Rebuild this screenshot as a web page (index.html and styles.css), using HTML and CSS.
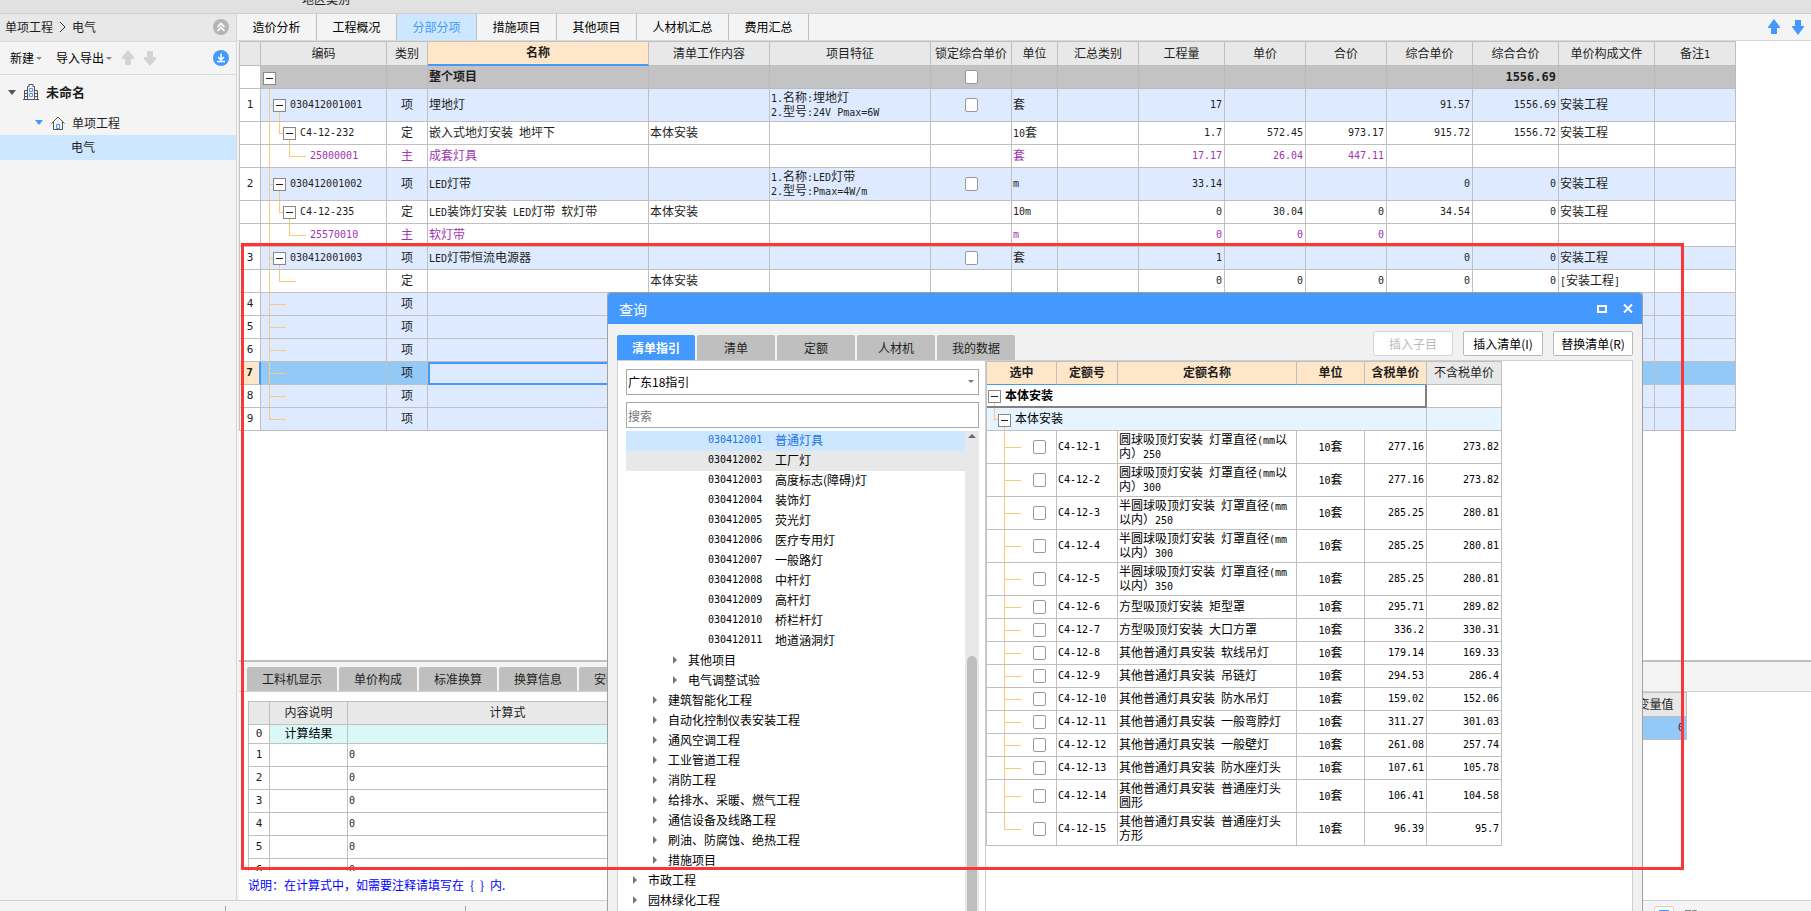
FILE: index.html
```html
<!DOCTYPE html>
<html lang="zh-CN">
<head>
<meta charset="utf-8">
<title>分部分项</title>
<link rel="stylesheet" href="styles.css">
</head>
<body>
<header class="strip"><span>地区类别</span></header>
<div class="work">
  <aside class="side">
    <div class="crumb">
      <span>单项工程</span>
      <svg width="7" height="12" viewBox="0 0 7 12"><path d="M1 1l5 5-5 5" fill="none" stroke="#333"/></svg>
      <span>电气</span>
      <button class="round end" aria-label="收起"><svg width="16" height="16" viewBox="0 0 16 16"><circle cx="8" cy="8" r="8" fill="#b5b5b5"/><path d="M4.500 8L8 4.500 11.500 8M4.500 12L8 8.500l3.500 3.500" fill="none" stroke="#fff" stroke-width="1.600"/></svg></button>
    </div>
    <div class="tools">
      <button class="menu">新建</button>
      <button class="menu second">导入导出</button>
      <button class="round" aria-label="上移"><svg width="12" height="16" viewBox="0 0 12 16"><path d="M6 0l6 7v2H9v6H3V9H0V7z" fill="#d4d4d4"/></svg></button>
      <button class="round" aria-label="下移"><svg width="12" height="16" viewBox="0 0 12 16"><path d="M6 16l6-7V7H9V1H3v6H0v2z" fill="#d4d4d4"/></svg></button>
      <button class="round end" aria-label="下载"><svg width="16" height="16" viewBox="0 0 16 16"><circle cx="8" cy="8" r="8" fill="#4499ff"/><path d="M8 3.500v6M5 7l3 3 3-3M4 11.500h8" fill="none" stroke="#fff" stroke-width="1.500"/></svg></button>
    </div>
    <nav class="project">
      <div class="p1"><svg width="8" height="5" viewBox="0 0 8 5"><path d="M0 0h8L4 5z" fill="#555"/></svg>
        <svg class="picon" width="16" height="16" viewBox="0 0 16 16"><path d="M4.500 15V2.500h1.500V.500h4v2h1.500V15M4.500 6.500h-3V15M11.500 6.500h3V15M0 15.500h16M1.500 9.500h3M1.500 12.500h3M11.500 9.500h3M11.500 12.500h3" fill="none" stroke="#555"/><path d="M6.500 4.500h3v3h-3zM6.500 9.500h3v3h-3z" fill="none" stroke="#4499ff"/></svg>
        <b>未命名</b></div>
      <div class="p2"><svg width="8" height="5" viewBox="0 0 8 5"><path d="M0 0h8L4 5z" fill="#4499ff"/></svg>
        <svg class="picon" width="14" height="14" viewBox="0 0 14 14"><path d="M.500 7.500L7 1l6.500 6.500M2.500 6v7.500h9V6" fill="none" stroke="#555"/><path d="M5.500 8.500h3v4h-3z" fill="none" stroke="#4499ff"/></svg>
        <span>单项工程</span></div>
      <div class="p3">电气</div>
    </nav>
  </aside>

  <main class="main">
    <div class="tabs">
      <button>造价分析</button><button>工程概况</button><button class="on">分部分项</button><button>措施项目</button><button>其他项目</button><button class="wide">人材机汇总</button><button>费用汇总</button>
      <div class="arrows">
        <svg width="12" height="16" viewBox="0 0 12 16"><path d="M6 0l6 8v1H9v6H3V9H0V8z" fill="#4499ff"/></svg>
        <svg width="12" height="16" viewBox="0 0 12 16"><path d="M6 16l6-8V7H9V1H3v6H0v1z" fill="#4499ff"/></svg>
      </div>
    </div>

    <div class="gridarea">
      <table class="grid items">
        <colgroup><col class="w21"><col class="w126"><col class="w41"><col class="w221"><col class="w121"><col class="w161"><col class="w81"><col class="w46"><col class="w81"><col class="w86"><col class="w81"><col class="w81"><col class="w86"><col class="w86"><col class="w96"><col class="w81"></colgroup>
        <thead><tr><th></th><th>编码</th><th>类别</th><th class="hot">名称</th><th>清单工作内容</th><th>项目特征</th><th>锁定综合单价</th><th>单位</th><th>汇总类别</th><th>工程量</th><th>单价</th><th>合价</th><th>综合单价</th><th>综合合价</th><th>单价构成文件</th><th>备注<span class="m">1</span></th></tr></thead>
        <tbody>
        <tr class="total"><th></th><td class="t0"><button class="tog" aria-label="折叠"></button></td><td></td><td>整个项目</td><td></td><td></td><td class="chk"><input type="checkbox" aria-label="锁定全部"></td><td></td><td></td><td></td><td></td><td></td><td></td><td class="n">1556.69</td><td></td><td></td></tr>
        <tr class="item tall"><th>1</th><td class="code t1"><button class="tog" aria-label="折叠"></button>030412001001</td><td class="c">项</td><td>埋地灯</td><td></td><td><span class="m">1.</span>名称<span class="m">:</span>埋地灯<br><span class="m">2.</span>型号<span class="m">:24V Pmax=6W</span></td><td class="chk"><input type="checkbox" aria-label="锁定 1"></td><td>套</td><td></td><td class="n">17</td><td></td><td></td><td class="n">91.57</td><td class="n">1556.69</td><td>安装工程</td><td></td></tr>
        <tr><th></th><td class="code t2"><button class="tog" aria-label="折叠"></button>C4-12-232</td><td class="c">定</td><td>嵌入式地灯安装&ensp;地坪下</td><td>本体安装</td><td></td><td></td><td><span class="m">10</span>套</td><td></td><td class="n">1.7</td><td class="n">572.45</td><td class="n">973.17</td><td class="n">915.72</td><td class="n">1556.72</td><td>安装工程</td><td></td></tr>
        <tr class="main-mat"><th></th><td class="code t3">25000001</td><td class="c">主</td><td>成套灯具</td><td></td><td></td><td></td><td>套</td><td></td><td class="n">17.17</td><td class="n">26.04</td><td class="n">447.11</td><td></td><td></td><td></td><td></td></tr>
        <tr class="item tall"><th>2</th><td class="code t1"><button class="tog" aria-label="折叠"></button>030412001002</td><td class="c">项</td><td><span class="m">LED</span>灯带</td><td></td><td><span class="m">1.</span>名称<span class="m">:LED</span>灯带<br><span class="m">2.</span>型号<span class="m">:Pmax=4W/m</span></td><td class="chk"><input type="checkbox" aria-label="锁定 2"></td><td class="u">m</td><td></td><td class="n">33.14</td><td></td><td></td><td class="n">0</td><td class="n">0</td><td>安装工程</td><td></td></tr>
        <tr><th></th><td class="code t2"><button class="tog" aria-label="折叠"></button>C4-12-235</td><td class="c">定</td><td><span class="m">LED</span>装饰灯安装<span class="m"> LED</span>灯带&ensp;软灯带</td><td>本体安装</td><td></td><td></td><td class="u">10m</td><td></td><td class="n">0</td><td class="n">30.04</td><td class="n">0</td><td class="n">34.54</td><td class="n">0</td><td>安装工程</td><td></td></tr>
        <tr class="main-mat"><th></th><td class="code t3">25570010</td><td class="c">主</td><td>软灯带</td><td></td><td></td><td></td><td class="u">m</td><td></td><td class="n">0</td><td class="n">0</td><td class="n">0</td><td></td><td></td><td></td><td></td></tr>
        <tr class="item"><th>3</th><td class="code t1"><button class="tog" aria-label="折叠"></button>030412001003</td><td class="c">项</td><td><span class="m">LED</span>灯带恒流电源器</td><td></td><td></td><td class="chk"><input type="checkbox" aria-label="锁定 3"></td><td>套</td><td></td><td class="n">1</td><td></td><td></td><td class="n">0</td><td class="n">0</td><td>安装工程</td><td></td></tr>
        <tr><th></th><td class="t2leaf"></td><td class="c">定</td><td></td><td>本体安装</td><td></td><td></td><td></td><td></td><td class="n">0</td><td class="n">0</td><td class="n">0</td><td class="n">0</td><td class="n">0</td><td><span class="m">[</span>安装工程<span class="m">]</span></td><td></td></tr>
        <tr class="item"><th>4</th><td class="t1leaf"></td><td class="c">项</td><td></td><td></td><td></td><td></td><td></td><td></td><td></td><td></td><td></td><td></td><td></td><td></td><td></td></tr>
        <tr class="item"><th>5</th><td class="t1leaf"></td><td class="c">项</td><td></td><td></td><td></td><td></td><td></td><td></td><td></td><td></td><td></td><td></td><td></td><td></td><td></td></tr>
        <tr class="item"><th>6</th><td class="t1leaf"></td><td class="c">项</td><td></td><td></td><td></td><td></td><td></td><td></td><td></td><td></td><td></td><td></td><td></td><td></td><td></td></tr>
        <tr class="item picked"><th>7</th><td class="t1leaf"></td><td class="c">项</td><td class="focus"></td><td></td><td></td><td></td><td></td><td></td><td></td><td></td><td></td><td></td><td></td><td></td><td></td></tr>
        <tr class="item"><th>8</th><td class="t1leaf"></td><td class="c">项</td><td></td><td></td><td></td><td></td><td></td><td></td><td></td><td></td><td></td><td></td><td></td><td></td><td></td></tr>
        <tr class="item"><th>9</th><td class="t1last"></td><td class="c">项</td><td></td><td></td><td></td><td></td><td></td><td></td><td></td><td></td><td></td><td></td><td></td><td></td><td></td></tr>
        </tbody>
      </table>
    </div>

    <section class="lower">
      <div class="ltabs"><button class="w90">工料机显示</button><button>单价构成</button><button>标准换算</button><button>换算信息</button><button>安装费用</button></div>
      <div class="lbody">
        <div class="calcs">
          <table class="grid calc">
            <colgroup><col class="w21"><col class="w78"><col class="w320"></colgroup>
            <thead><tr><th></th><th>内容说明</th><th>计算式</th></tr></thead>
            <tbody>
            <tr class="result"><th>0</th><td class="c">计算结果</td><td></td></tr>
            <tr><th>1</th><td></td><td class="code">0</td></tr>
            <tr><th>2</th><td></td><td class="code">0</td></tr>
            <tr><th>3</th><td></td><td class="code">0</td></tr>
            <tr><th>4</th><td></td><td class="code">0</td></tr>
            <tr><th>5</th><td></td><td class="code">0</td></tr>
            <tr><th>6</th><td></td><td class="code">0</td></tr>
            </tbody>
          </table>
        </div>
        <table class="grid vars">
          <thead><tr><th>变量值</th></tr></thead>
          <tbody><tr class="picked"><td class="n">0</td></tr></tbody>
        </table>
      </div>
      <p class="note">说明：在计算式中，如需要注释请填写在&ensp;{&ensp;}&ensp;内.</p>
    </section>
  </main>
</div>
<footer class="status"><i></i><i></i>
  <svg class="chip" width="60" height="6" viewBox="0 0 60 6"><rect x=".500" y=".500" width="19" height="19" rx="2" fill="#fff" stroke="#d0d0d0"/><path d="M5 6V4h10v2z" fill="#4499ff"/><path d="M31 4.500h6M38.500 6V4.500h4V6" fill="none" stroke="#888"/></svg>
</footer>

<section class="dialog" role="dialog" aria-label="查询">
  <header class="title"><h2>查询</h2>
    <button aria-label="最大化"><svg width="10" height="8" viewBox="0 0 10 8"><path d="M1 1h8v6H1z" fill="none" stroke="#fff" stroke-width="2"/></svg></button>
    <button aria-label="关闭"><svg width="10" height="9" viewBox="0 0 10 9"><path d="M1 .500l8 8M9 .500l-8 8" stroke="#fff" stroke-width="2"/></svg></button>
  </header>
  <div class="dbar">
    <div class="dtabs"><button class="on">清单指引</button><button>清单</button><button>定额</button><button>人材机</button><button>我的数据</button></div>
    <div class="acts"><button disabled>插入子目</button><button>插入清单(I)</button><button>替换清单(R)</button></div>
  </div>
  <div class="dbody">
    <div class="guide">
      <div class="pick"><select aria-label="指引"><option>广东18指引</option></select></div>
      <input class="search" type="text" placeholder="搜索" aria-label="搜索">
      <div class="list">
        <ul>
          <li class="leaf sel"><span class="k">030412001</span>普通灯具</li>
          <li class="leaf hov"><span class="k">030412002</span>工厂灯</li>
          <li class="leaf"><span class="k">030412003</span>高度标志(障碍)灯</li>
          <li class="leaf"><span class="k">030412004</span>装饰灯</li>
          <li class="leaf"><span class="k">030412005</span>荧光灯</li>
          <li class="leaf"><span class="k">030412006</span>医疗专用灯</li>
          <li class="leaf"><span class="k">030412007</span>一般路灯</li>
          <li class="leaf"><span class="k">030412008</span>中杆灯</li>
          <li class="leaf"><span class="k">030412009</span>高杆灯</li>
          <li class="leaf"><span class="k">030412010</span>桥栏杆灯</li>
          <li class="leaf"><span class="k">030412011</span>地道涵洞灯</li>
          <li class="d3">其他项目</li>
          <li class="d3">电气调整试验</li>
          <li class="d2">建筑智能化工程</li>
          <li class="d2">自动化控制仪表安装工程</li>
          <li class="d2">通风空调工程</li>
          <li class="d2">工业管道工程</li>
          <li class="d2">消防工程</li>
          <li class="d2">给排水、采暖、燃气工程</li>
          <li class="d2">通信设备及线路工程</li>
          <li class="d2">刷油、防腐蚀、绝热工程</li>
          <li class="d2">措施项目</li>
          <li class="d1">市政工程</li>
          <li class="d1">园林绿化工程</li>
        </ul>
        <div class="track"><svg width="8" height="4" viewBox="0 0 8 4"><path d="M0 4h8L4 0z" fill="#667"/></svg><div class="thumb"></div></div>
      </div>
    </div>
    <div class="quota">
      <table class="grid quotas">
        <colgroup><col class="w70"><col class="w61"><col class="w179"><col class="w68"><col class="w62"><col class="w75"></colgroup>
        <thead><tr><th class="hot">选中</th><th class="hot">定额号</th><th class="hot">定额名称</th><th class="hot">单位</th><th class="hot">含税单价</th><th>不含税单价</th></tr></thead>
        <tbody>
        <tr><td class="q0" colspan="5"><button class="tog" aria-label="折叠"></button>本体安装</td><td></td></tr>
        <tr class="group"><td class="q1" colspan="5"><button class="tog" aria-label="折叠"></button>本体安装</td><td></td></tr>
        <tr class="tall"><td class="q2"><input type="checkbox" aria-label="C4-12-1"></td><td class="code">C4-12-1</td><td>圆球吸顶灯安装&ensp;灯罩直径<span class="m">(mm</span>以<br>内）<span class="m">250</span></td><td class="c"><span class="m">10</span>套</td><td class="n">277.16</td><td class="n">273.82</td></tr>
        <tr class="tall"><td class="q2"><input type="checkbox" aria-label="C4-12-2"></td><td class="code">C4-12-2</td><td>圆球吸顶灯安装&ensp;灯罩直径<span class="m">(mm</span>以<br>内）<span class="m">300</span></td><td class="c"><span class="m">10</span>套</td><td class="n">277.16</td><td class="n">273.82</td></tr>
        <tr class="tall"><td class="q2"><input type="checkbox" aria-label="C4-12-3"></td><td class="code">C4-12-3</td><td>半圆球吸顶灯安装&ensp;灯罩直径<span class="m">(mm</span><br>以内）<span class="m">250</span></td><td class="c"><span class="m">10</span>套</td><td class="n">285.25</td><td class="n">280.81</td></tr>
        <tr class="tall"><td class="q2"><input type="checkbox" aria-label="C4-12-4"></td><td class="code">C4-12-4</td><td>半圆球吸顶灯安装&ensp;灯罩直径<span class="m">(mm</span><br>以内）<span class="m">300</span></td><td class="c"><span class="m">10</span>套</td><td class="n">285.25</td><td class="n">280.81</td></tr>
        <tr class="tall"><td class="q2"><input type="checkbox" aria-label="C4-12-5"></td><td class="code">C4-12-5</td><td>半圆球吸顶灯安装&ensp;灯罩直径<span class="m">(mm</span><br>以内）<span class="m">350</span></td><td class="c"><span class="m">10</span>套</td><td class="n">285.25</td><td class="n">280.81</td></tr>
        <tr><td class="q2"><input type="checkbox" aria-label="C4-12-6"></td><td class="code">C4-12-6</td><td>方型吸顶灯安装&ensp;矩型罩</td><td class="c"><span class="m">10</span>套</td><td class="n">295.71</td><td class="n">289.82</td></tr>
        <tr><td class="q2"><input type="checkbox" aria-label="C4-12-7"></td><td class="code">C4-12-7</td><td>方型吸顶灯安装&ensp;大口方罩</td><td class="c"><span class="m">10</span>套</td><td class="n">336.2</td><td class="n">330.31</td></tr>
        <tr><td class="q2"><input type="checkbox" aria-label="C4-12-8"></td><td class="code">C4-12-8</td><td>其他普通灯具安装&ensp;软线吊灯</td><td class="c"><span class="m">10</span>套</td><td class="n">179.14</td><td class="n">169.33</td></tr>
        <tr><td class="q2"><input type="checkbox" aria-label="C4-12-9"></td><td class="code">C4-12-9</td><td>其他普通灯具安装&ensp;吊链灯</td><td class="c"><span class="m">10</span>套</td><td class="n">294.53</td><td class="n">286.4</td></tr>
        <tr><td class="q2"><input type="checkbox" aria-label="C4-12-10"></td><td class="code">C4-12-10</td><td>其他普通灯具安装&ensp;防水吊灯</td><td class="c"><span class="m">10</span>套</td><td class="n">159.02</td><td class="n">152.06</td></tr>
        <tr><td class="q2"><input type="checkbox" aria-label="C4-12-11"></td><td class="code">C4-12-11</td><td>其他普通灯具安装&ensp;一般弯脖灯</td><td class="c"><span class="m">10</span>套</td><td class="n">311.27</td><td class="n">301.03</td></tr>
        <tr><td class="q2"><input type="checkbox" aria-label="C4-12-12"></td><td class="code">C4-12-12</td><td>其他普通灯具安装&ensp;一般壁灯</td><td class="c"><span class="m">10</span>套</td><td class="n">261.08</td><td class="n">257.74</td></tr>
        <tr><td class="q2"><input type="checkbox" aria-label="C4-12-13"></td><td class="code">C4-12-13</td><td>其他普通灯具安装&ensp;防水座灯头</td><td class="c"><span class="m">10</span>套</td><td class="n">107.61</td><td class="n">105.78</td></tr>
        <tr class="tall"><td class="q2"><input type="checkbox" aria-label="C4-12-14"></td><td class="code">C4-12-14</td><td>其他普通灯具安装&ensp;普通座灯头<br>圆形</td><td class="c"><span class="m">10</span>套</td><td class="n">106.41</td><td class="n">104.58</td></tr>
        <tr class="tall"><td class="q2 last"><input type="checkbox" aria-label="C4-12-15"></td><td class="code">C4-12-15</td><td>其他普通灯具安装&ensp;普通座灯头<br>方形</td><td class="c"><span class="m">10</span>套</td><td class="n">96.39</td><td class="n">95.7</td></tr>
        </tbody>
      </table>
    </div>
  </div>
</section>
<div class="mark"></div>
</body>
</html>
```
FILE: styles.css
```css
* { box-sizing: border-box; }
body {
  margin: 0; height: 100vh; position: relative; overflow: hidden;
  display: flex; flex-direction: column; background: #f4f4f4; color: #1e1e1e;
  font: 12px/14px "Noto Sans CJK SC", sans-serif;
}
button, input, select { font: inherit; color: inherit; margin: 0; }
button { background: none; border: 0; padding: 0; }
svg { display: block; flex: none; }

.strip { flex: none; height: 14px; overflow: hidden; background: #e1e1e1; border-bottom: 1px solid #cfcfcf; padding-left: 302px; }
.strip span { display: block; margin-top: -8px; }
.work { flex: 1; min-height: 0; display: flex; }

/* project sidebar */
.side { flex: none; width: 237px; border-right: 1px solid #d6d6d6; }
.crumb { height: 28px; display: flex; align-items: center; gap: 6px; padding: 0 7px 1px 5px; background: #e8e8e8; border-bottom: 1px solid #d9d9d9; }
.tools { height: 33px; display: flex; align-items: center; gap: 10px; padding: 0 7px 0 10px; border-bottom: 1px solid #d9d9d9; color: #000; }
.end { margin-left: auto; }
.menu { display: flex; align-items: center; gap: 2px; }
.menu::after { content: ""; border: 3px solid transparent; border-top-color: #888; border-bottom: 0; }
.second { margin-left: 4px; }
.project { padding-top: 3px; }
.p1, .p2 { display: flex; align-items: center; gap: 7px; height: 30px; padding: 0 0 2px 8px; }
.p1 b { font-size: 13px; }
.p2 { height: 27px; padding: 2px 0 0 35px; }
.p2 .picon { margin-left: 1px; }
.p3 { height: 25px; padding: 5px 0 0 71px; background: #cce7ff; }

/* page tabs */
.main { flex: 1; min-width: 0; display: flex; flex-direction: column; }
.tabs { flex: none; display: flex; height: 27px; border-bottom: 1px solid #d9d9d9; color: #000; }
.tabs button { width: 80px; border-right: 1px solid #c0c0c0; }
.tabs .wide { width: 92px; }
.tabs .on { background: #cce7ff; color: #4499ff; }
.arrows { display: flex; gap: 12px; align-items: center; margin-left: auto; padding-right: 7px; }

/* data grids */
.gridarea { flex: 1; min-height: 0; margin-left: 2px; background: #fff; overflow: hidden; }
.grid { table-layout: fixed; border-spacing: 0; border: 0 solid #c0c0c0; border-width: 1px 0 0 1px; background: #fff; }
.grid th, .grid td { height: 23px; padding: 0 2px 2px 1px; border: 0 solid #c0c0c0; border-width: 0 1px 1px 0; text-align: left; font-weight: normal; white-space: nowrap; }
.grid th { text-align: center; padding: 0 0 2px; }
.grid thead th { background: #e8e8e8; height: 24px; }
.grid .tall td, .grid .tall th { height: 33px; }
.grid tbody th, .grid .code, .grid .n, .grid .u, .m, .k { font-family: "DejaVu Sans Mono", monospace; font-size: 10px; }
.m { line-height: 1px; }
.grid .c { text-align: center; padding: 0 0 2px; }
.grid .code, .grid .n, .grid .u { padding-bottom: 0; }
.grid .chk { text-align: center; padding: 0; line-height: 0; }
.grid tbody th { padding: 0; font-size: 11px; }
.grid .n { text-align: right; }
.grid thead .hot { background: #ffe6c8; border-bottom: 2px solid #4499ff; font-weight: bold; }
.items { width: 1497px; }
.total td { background-color: #c3c3c3; border-color: #bababa; }
.grid .total td { font-weight: bold; }
.grid .total .n { font-size: 12px; }
.item td { background-color: #deeaff; }
.main-mat td { color: #a035b0; }
.picked td { background-color: #92c9f7; }
.grid .picked th { background: #ffe6c8; font-weight: bold; border-right: 2px solid #4499ff; }
.grid .picked .focus { background: #deeaff; border: 2px solid #4499ff; }
.w21 { width: 21px; } .w41 { width: 41px; } .w46 { width: 46px; } .w61 { width: 61px; } .w62 { width: 62px; }
.w68 { width: 68px; } .w70 { width: 70px; } .w75 { width: 75px; } .w78 { width: 78px; } .w81 { width: 81px; }
.w86 { width: 86px; } .w96 { width: 96px; } .w121 { width: 121px; } .w126 { width: 126px; } .w161 { width: 161px; }
.w179 { width: 179px; } .w221 { width: 221px; } .w320 { width: 320px; }

.tog { width: 13px; height: 13px; margin-right: 4px; border: 1px solid #888; background: linear-gradient(#222, #222) center / 7px 1px no-repeat #fff; vertical-align: middle; }
input[type=checkbox] { appearance: none; width: 13px; height: 14px; border: 1px solid #999; border-radius: 2px; background: #fff; vertical-align: middle; }

/* tree connectors */
.t0, .t1, .t2, .t3, .t2leaf, .t1leaf, .t1last, .q0, .q1, .q2 { --l: linear-gradient(#ffc878, #ffc878); background-repeat: no-repeat; }
.grid .t0 { padding: 0 0 0 2px; background-image: var(--l); background-position: 8px 100%; background-size: 1px 50%; }
.grid .t1 { padding-left: 12px; background-image: var(--l), var(--l), var(--l); background-position: 8px 0, 8px 50%, 18px 100%; background-size: 1px 100%, 5px 1px, 1px 50%; }
.grid .t2 { padding-left: 22px; background-image: var(--l), var(--l), var(--l), var(--l); background-position: 8px 0, 18px 0, 18px 50%, 28px 100%; background-size: 1px 100%, 1px 50%, 5px 1px, 1px 50%; }
.grid .t3 { padding-left: 49px; background-image: var(--l), var(--l), var(--l); background-position: 8px 0, 28px 0, 28px 50%; background-size: 1px 100%, 1px 50%, 17px 1px; }
.t2leaf { background-image: var(--l), var(--l), var(--l); background-position: 8px 0, 18px 0, 18px 50%; background-size: 1px 100%, 1px 50%, 17px 1px; }
.t1leaf { background-image: var(--l), var(--l); background-position: 8px 0, 8px 50%; background-size: 1px 100%, 17px 1px; }
.t1last { background-image: var(--l), var(--l); background-position: 8px 0, 8px 50%; background-size: 1px 50%, 17px 1px; }

/* lower panel */
.lower { flex: none; height: 240px; margin-left: 2px; display: flex; flex-direction: column; background: #fff; border-top: 2px solid #c0c0c0; }
.ltabs { flex: none; display: flex; gap: 2px; height: 30px; padding: 5px 0 0 8px; background: #f4f4f4; border-bottom: 1px solid #d0d0d0; }
.ltabs button, .dtabs button { width: 78px; background: #bfbfbf; border-radius: 2px 2px 0 0; }
.ltabs .w90 { width: 90px; }
.lbody { display: flex; height: 179px; overflow: hidden; }
.calcs { width: 1385px; padding: 9px 0 0 9px; }
.calc { width: 420px; }
.grid.calc thead th { height: 23px; }
.grid .result td, .grid .result th { height: 19px; }
.result td { background: #daf8f8; color: #000; }
.vars { width: 63px; height: 47px; }
.note { margin: 0; padding: 7px 9px; color: #00f; }
.status { flex: none; height: 11px; display: flex; border-top: 1px solid #d0d0d0; padding: 5px 97px 0 0; }
.status i { width: 1px; margin-left: 225px; background: #a0a0b0; }
.status i + i { margin-left: 239px; }
.chip { margin-left: auto; }

/* query dialog */
.dialog { position: absolute; left: 607px; right: 168px; top: 292px; bottom: 0; display: flex; flex-direction: column; background: #f1f1f1; border: 1px solid #a0a0a0; border-bottom: 0; border-radius: 4px 4px 0 0; overflow: hidden; }
.title { flex: none; display: flex; align-items: center; gap: 16px; height: 31px; padding: 0 9px 0 11px; background: #4499ff; color: #fff; }
.title h2 { flex: 1; margin: 0; font-size: 14px; font-weight: normal; }
.dbar { flex: none; display: flex; justify-content: space-between; height: 36px; padding: 0 9px; }
.dtabs { display: flex; gap: 2px; padding-top: 11px; }
.dtabs .on { background: #4499ff; color: #fff; font-weight: bold; }
.acts { display: flex; gap: 10px; padding: 7px 0 4px; color: #000; }
.acts button { width: 80px; border: 1px solid #b8b8b8; border-radius: 2px; background: #fff; }
.acts button:disabled { color: #bbb; border-color: #d4d4d4; }
.dbody { flex: 1; min-height: 0; display: flex; margin: 0 9px; background: #fff; border: 1px solid #cfcfcf; border-bottom: 0; color: #000; }
.guide { flex: none; width: 367px; display: flex; flex-direction: column; padding: 8px 6px 0 8px; }
.pick { position: relative; margin-bottom: 7px; }
.pick::after { content: ""; position: absolute; right: 5px; top: 11px; border: 3px solid transparent; border-top-color: #777; border-bottom: 0; }
.pick select, .search { display: block; width: 100%; height: 26px; padding: 0 1px; border: 1px solid #a8a8a8; border-radius: 0; appearance: none; background: #fff; }
.search::placeholder { color: #777; }
.list { flex: 1; min-height: 0; display: flex; margin-top: 3px; overflow: hidden; }
.list ul { flex: 1; margin: 0; padding: 0; list-style: none; }
.list li { display: flex; align-items: center; height: 20px; padding-bottom: 3px; white-space: nowrap; }
.leaf { padding-left: 82px; }
.k { width: 67px; }
.sel { background: #cce7ff; color: #1a73e8; }
.hov { background: #e8e8e8; }
.d1, .d2, .d3 { gap: 11px; }
.d1 { padding-left: 7px; } .d2 { padding-left: 27px; } .d3 { padding-left: 47px; }
.d1::before, .d2::before, .d3::before { content: ""; border: 4px solid transparent; border-left-color: #777; border-right: 0; }
.track { width: 14px; display: flex; flex-direction: column; align-items: center; padding-top: 3px; background: #e8e8e8; }
.thumb { flex: 1; width: 10px; margin-top: 218px; background: #bfbfbf; border-radius: 5px 5px 0 0; }
.quota { flex: 1; border-left: 1px solid #cfcfcf; }
.quotas { width: 516px; color: #000; }
.grid.quotas thead th { height: 23px; color: #1e1e1e; border-bottom-width: 1px; }
.grid .q0 { padding: 0 0 0 1px; font-weight: bold; border-right: 2px solid #808080; border-bottom: 2px solid #808080; background-image: var(--l); background-position: 7px 100%; background-size: 1px 40%; }
.group td { background-color: #e6f4ff; }
.grid .q1 { padding: 0 0 0 11px; background-image: var(--l), var(--l), var(--l); background-position: 7px 0, 7px 50%, 17px 100%; background-size: 1px 50%, 5px 1px, 1px 50%; }
.grid .q2 { padding: 0 0 0 46px; line-height: 0; background-image: var(--l), var(--l); background-position: 17px 0, 17px 50%; background-size: 1px 100%, 17px 1px; }
.grid .q2.last { background-size: 1px 50%, 17px 1px; }

/* highlight frame across the workspace */
.mark { position: absolute; left: 241px; right: 127px; top: 243px; bottom: 41px; border: 3px solid #fc3636; pointer-events: none; }
```
